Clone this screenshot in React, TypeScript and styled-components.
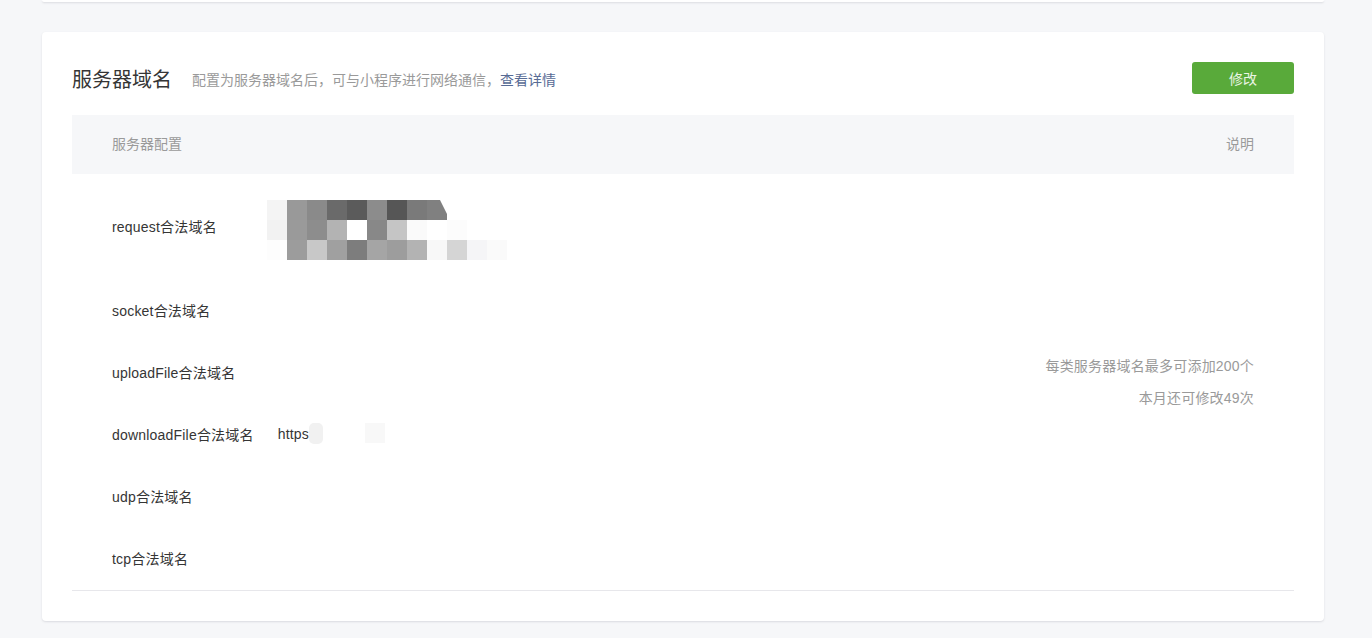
import React from 'react';
import styled, { createGlobalStyle } from 'styled-components';

const GlobalStyle = createGlobalStyle`
	html, body {
		margin: 0;
		padding: 0;
		background: #f6f7f9;
	}
	body {
		font-family: 'Liberation Sans', 'Noto Sans CJK SC', sans-serif;
		color: #353535;
		-webkit-font-smoothing: antialiased;
	}
`;

const Page = styled.div`
	width: 1372px;
	height: 638px;
	overflow: hidden;
	background: #f6f7f9;
`;

const PrevCard = styled.div`
	height: 2px;
	margin: 0 48px 30px 42px;
	background: #fff;
	border-radius: 0 0 4px 4px;
	box-shadow: 0 1px 2px rgba(140, 140, 150, 0.25);
`;

const Card = styled.section`
	margin: 0 48px 0 42px;
	padding: 30px;
	background: #fff;
	border-radius: 4px;
	box-shadow: 0 1px 2px rgba(140, 140, 150, 0.25);
`;

const TitleRow = styled.div`
	display: flex;
	align-items: center;
	height: 32px;
	margin-bottom: 21px;

	h2 {
		margin: 0;
		font-size: 20px;
		font-weight: 400;
		color: #353535;
	}

	.desc {
		margin-left: 20px;
		font-size: 14px;
		color: #9a9a9a;
		margin-top: 1px;

		a {
			color: #576b95;
			text-decoration: none;
		}
	}
`;

const PrimaryButton = styled.button`
	margin-left: auto;
	width: 102px;
	height: 32px;
	border: 0;
	border-radius: 3px;
	background: #59aa3a;
	color: #eaf5e4;
	font-family: inherit;
	font-size: 14px;
	cursor: pointer;
`;

const TableHead = styled.div`
	display: flex;
	justify-content: space-between;
	align-items: center;
	height: 59px;
	box-sizing: border-box;
	padding: 0 40px 4px;
	background: #f6f7f9;
	font-size: 14px;
	color: #9a9a9a;
`;

const TableBody = styled.div`
	display: grid;
	grid-template-columns: auto 1fr auto;
	grid-template-rows: 106px repeat(5, 62px);
	column-gap: 24px;
	padding: 0 40px;
	border-bottom: 1px solid #e7e7eb;
	font-size: 14px;
	letter-spacing: 0.2px;
`;

const Label = styled.div`
	display: flex;
	align-items: center;
	padding-bottom: 2px;
	color: #353535;
`;

const Value = styled.div`
	display: flex;
	align-items: center;
	padding-bottom: 2px;
	color: #353535;
`;

const Note = styled.div`
	grid-column: 3;
	grid-row: 1 / -1;
	align-self: center;
	text-align: right;
	line-height: 32px;
	color: #9a9a9a;
`;

const Mosaic = styled.svg<{ $shift?: number; $top?: number }>`
	display: block;
	margin-left: ${p => p.$shift ?? 0}px;
	margin-top: ${p => p.$top ?? 0}px;
	filter: blur(0.6px);
`;

// 打码区域 : 每格 20px
const requestCells: string[][] = [
	['#f4f4f4', '#999999', '#8a8a8a', '#6a6a6a', '#5b5b5b', '#8c8c8c', '#565656', '#7a7a7a', '#808080'],
	['#f2f2f2', '#9a9a9a', '#8d8d8d', '#b3b3b3', '#ffffff', '#888888', '#c5c5c5', '#fafafa', '#ffffff', '#fcfcfc'],
	['#fdfdfd', '#9c9c9c', '#c8c8c8', '#a0a0a0', '#7d7d7d', '#a5a5a5', '#9d9d9d', '#b3b3b3', '#f8f8f8', '#d5d5d5', '#f5f5f7', '#fafafa'],
];

const rows = [
	'request合法域名',
	'socket合法域名',
	'uploadFile合法域名',
	'downloadFile合法域名',
	'udp合法域名',
	'tcp合法域名',
];

function RequestMosaic(): JSX.Element {
	return (
		<Mosaic width={240} height={60} $shift={-11} $top={8} viewBox="0 0 240 60">
			{requestCells.map((line, r) =>
				line.map((c, i) => {
					if (r === 0 && i === 8) {
						return (
							<polygon
								key={`${r}-${i}`}
								points="160,0 173,0 180,14 180,20 160,20"
								fill={c}
							/>
						);
					}
					return (
						<rect key={`${r}-${i}`} x={i * 20} y={r * 20} width={20} height={20} fill={c} />
					);
				}),
			)}
		</Mosaic>
	);
}

function HttpsValue(): JSX.Element {
	return (
		<>
			https
			<Mosaic width={80} height={22} viewBox="0 0 80 22">
				<rect x={0} y={0} width={14} height={21} rx={5} fill="#f1f1f1" />
				<rect x={56} y={0} width={20} height={20} fill="#f8f8f8" />
			</Mosaic>
		</>
	);
}

export default function App(): JSX.Element {
	return (
		<Page>
			<GlobalStyle />
			<PrevCard />
			<Card>
				<TitleRow>
					<h2>服务器域名</h2>
					<span className="desc">
						配置为服务器域名后，可与小程序进行网络通信，<a href="#">查看详情</a>
					</span>
					<PrimaryButton>修改</PrimaryButton>
				</TitleRow>
				<TableHead>
					<span>服务器配置</span>
					<span>说明</span>
				</TableHead>
				<TableBody>
					{rows.map((name, idx) => (
						<React.Fragment key={name}>
							<Label style={{ gridRow: idx + 1 }}>{name}</Label>
							<Value style={{ gridRow: idx + 1 }}>
								{idx === 0 && <RequestMosaic />}
								{idx === 3 && <HttpsValue />}
							</Value>
						</React.Fragment>
					))}
					<Note>
						<div>每类服务器域名最多可添加200个</div>
						<div>本月还可修改49次</div>
					</Note>
				</TableBody>
			</Card>
		</Page>
	);
}
